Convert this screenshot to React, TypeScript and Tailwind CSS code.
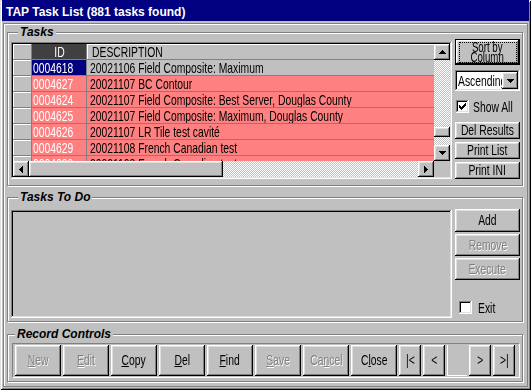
import type { ReactNode } from "react"

const raised =
  "bg-[#c0c0c0] shadow-[inset_-1px_-1px_#000,inset_1px_1px_#fff,inset_-2px_-2px_#808080,inset_2px_2px_#dfdfdf]"
const field =
  "shadow-[inset_-1px_-1px_#fff,inset_1px_1px_#808080,inset_-2px_-2px_#dfdfdf,inset_2px_2px_#000]"
const dither =
  "bg-[image:repeating-conic-gradient(#c0c0c0_0%_25%,#ffffff_0%_50%)] bg-[length:2px_2px]"

const tasks = [
  ["0004618", "20021106 Field Composite: Maximum"],
  ["0004627", "20021107 BC Contour"],
  ["0004624", "20021107 Field Composite: Best Server, Douglas County"],
  ["0004625", "20021107 Field Composite: Maximum, Douglas County"],
  ["0004626", "20021107 LR Tile test cavité"],
  ["0004629", "20021108 French Canadian test"],
  ["0004630", "20021108 French Canadian test"],
]

// the old dialog font is tall and narrow, squeeze Liberation Sans to match
function N({ children, center }: { children: ReactNode; center?: boolean }) {
  return (
    <span className={`inline-block scale-x-[0.69] ${center ? "origin-center" : "origin-left"}`}>{children}</span>
  )
}

function Button({
  children,
  disabled,
  className = "",
}: {
  children: ReactNode
  disabled?: boolean
  className?: string
}) {
  return (
    <div
      className={`${raised} flex items-center justify-center ${
        disabled ? "text-[#808080] [text-shadow:1px_1px_0_#fff]" : "text-black"
      } ${className}`}
    >
      <N center>{children}</N>
    </div>
  )
}

function Arrow({ dir }: { dir: "up" | "down" | "left" | "right" }) {
  if (dir === "up" || dir === "down") {
    return (
      <svg width="7" height="4" viewBox="0 0 7 4" shapeRendering="crispEdges">
        <polygon points={dir === "up" ? "3.5,0 7,4 0,4" : "0,0 7,0 3.5,4"} fill="#000" />
      </svg>
    )
  }
  return (
    <svg width="4" height="7" viewBox="0 0 4 7" shapeRendering="crispEdges">
      <polygon points={dir === "left" ? "0,3.5 4,0 4,7" : "0,0 4,3.5 0,7"} fill="#000" />
    </svg>
  )
}

function ScrollBtn({ dir }: { dir: "up" | "down" | "left" | "right" }) {
  return (
    <div className={`${raised} w-[16px] h-[16px] shrink-0 flex items-center justify-center`}>
      <Arrow dir={dir} />
    </div>
  )
}

function Checkbox({ checked }: { checked?: boolean }) {
  return (
    <div className={`${field} bg-white w-[13px] h-[13px] shrink-0 flex items-center justify-center`}>
      {checked && (
        <svg width="7" height="7" viewBox="0 0 7 7" shapeRendering="crispEdges">
          <path d="M0 2h1v1h1v1h1v-1h1v-1h1v-1h1v-1h1v3h-1v1h-1v1h-1v1h-1v1h-1v-1h-1v-1h-1z" fill="#000" />
        </svg>
      )}
    </div>
  )
}

function GroupBox({
  label,
  labelPos,
  className,
  children,
}: {
  label: string
  labelPos: string
  className: string
  children: ReactNode
}) {
  return (
    <div
      className={`relative shrink-0 w-[516px] border border-[#808080] shadow-[inset_1px_1px_#fff,1px_1px_#fff] ${className}`}
    >
      <span
        className={`absolute -top-[7px] ${labelPos} px-[2px] bg-[#c0c0c0] font-bold italic text-[12px] leading-[13px]`}
      >
        {label}
      </span>
      {children}
    </div>
  )
}

function TaskGrid() {
  return (
    <div className={`${field} bg-[#c0c0c0] w-[441px] h-[137px] p-[2px] mt-[3px] shrink-0`}>
      <div className="flex h-[117px]">
        <div className="w-[421px] overflow-hidden">
          {/* header */}
          <div className="flex h-[16px] border-b border-[#808080] leading-[15px]">
            <div className="w-[19px] border-r border-[#808080] shadow-[inset_1px_1px_#fff]" />
            <div className="w-[55px] border-r border-[#808080] bg-[#404040] text-white text-center">
              <N center>ID</N>
            </div>
            <div className="flex-1 pl-[5px] shadow-[inset_1px_1px_#fff]">
              <N>DESCRIPTION</N>
            </div>
          </div>
          {tasks.map(([id, desc], i) => (
            <div key={id + i} className="flex h-[16px] border-b border-[#808080] leading-[15px]">
              <div className="w-[19px] border-r border-[#808080] shadow-[inset_1px_1px_#fff]" />
              <div
                className={`w-[55px] border-r border-[#808080] pl-[1px] text-white ${
                  i === 0 ? "bg-[#000080]" : "bg-[#ff8080]"
                }`}
              >
                <N>{id}</N>
              </div>
              <div className={`flex-1 pl-[3px] overflow-hidden ${i === 0 ? "bg-[#c0c0c0]" : "bg-[#ff8080]"}`}>
                <N>{desc}</N>
              </div>
            </div>
          ))}
        </div>
        <div className="w-[16px] flex flex-col">
          <ScrollBtn dir="up" />
          <div className={`h-[67px] ${dither}`} />
          <div className={`h-[10px] ${raised}`} />
          <div className={`flex-1 ${dither}`} />
          <ScrollBtn dir="down" />
        </div>
      </div>
      <div className="flex h-[16px]">
        <ScrollBtn dir="left" />
        <div className={`w-[194px] ${raised}`} />
        <div className={`flex-1 ${dither}`} />
        <ScrollBtn dir="right" />
        <div className="w-[16px] bg-[#c0c0c0]" />
      </div>
    </div>
  )
}

export default function App() {
  return (
    <div className="w-[531px] h-[390px] bg-[#c0c0c0] px-[2px] shadow-[inset_1px_1px_#dfdfdf,inset_-1px_-1px_#000,inset_2px_2px_#fff,inset_-2px_-2px_#808080] font-['Liberation_Sans',Arial,sans-serif] text-[15px] text-black whitespace-nowrap">
      {/* Title bar */}
      <div className="h-[21px] bg-[#000080] text-white pl-[4px] pt-[5px] font-bold text-[12px] leading-[14px]">
        TAP Task List (881 tasks found)
      </div>

      <div className="mt-[2px] mx-[1px] h-[364px] border border-[#808080] shadow-[inset_1px_1px_#fff] pt-[8px] pl-[3px] flex flex-col">
        {/* Tasks */}
        <GroupBox label="Tasks" labelPos="left-[10px]" className="h-[154px] pl-[3px] pt-[6px]">
          <div className="flex items-start gap-[3px]">
            <TaskGrid />
            <div className="w-[65px] flex flex-col">
              <div className="relative h-[26px] border border-black">
                <div className={`${raised} h-full flex flex-col items-center justify-center text-[14px] leading-[10px]`}>
                  <N center>Sort by</N>
                  <N center>Column</N>
                </div>
                <div className="absolute left-[3px] right-[2px] top-[2px] bottom-[1px] border border-dotted border-black" />
              </div>
              <div className={`${field} bg-white mt-[5px] h-[21px] p-[2px] flex`}>
                <div className="flex-1 overflow-hidden pl-[1px] leading-[17px]">
                  <N>Ascending</N>
                </div>
                <div className={`${raised} w-[16px] flex items-center justify-center`}>
                  <Arrow dir="down" />
                </div>
              </div>
              <div className="mt-[9px] ml-[1px] flex items-center gap-[4px] h-[13px]">
                <Checkbox checked />
                <span className="leading-[13px]">
                  <N>Show All</N>
                </span>
              </div>
              <Button className="mt-[9px] h-[17px]">Del Results</Button>
              <Button className="mt-[3px] h-[17px]">Print List</Button>
              <Button className="mt-[3px] h-[17px]">Print INI</Button>
            </div>
          </div>
        </GroupBox>

        {/* Tasks To Do */}
        <GroupBox label="Tasks To Do" labelPos="left-[10px]" className="mt-[11px] h-[125px] pl-[3px] pt-[11px]">
          <div className="flex items-start gap-[3px]">
            <div className={`${field} bg-[#c0c0c0] w-[441px] h-[108px] mt-[1px]`} />
            <div className="w-[65px] flex flex-col">
              <Button className="h-[23px]">Add</Button>
              <Button disabled className="mt-[2px] h-[22px]">
                Remove
              </Button>
              <Button disabled className="mt-[2px] h-[22px]">
                Execute
              </Button>
              <div className="mt-[21px] ml-[4px] flex items-center gap-[6px] h-[13px]">
                <Checkbox />
                <span className="leading-[13px]">
                  <N>Exit</N>
                </span>
              </div>
            </div>
          </div>
        </GroupBox>

        {/* Record Controls */}
        <GroupBox label="Record Controls" labelPos="left-[7px]" className="mt-[12px] h-[48px] pl-[4px] pt-[8px]">
          <div className="w-[508px] h-[35px] border-t border-l border-[#808080] border-b border-r border-b-white border-r-white pt-[1px] pl-[2px] flex gap-[2px]">
            <Button disabled className="w-[46px] h-[31px]">
              <u>N</u>ew
            </Button>
            <Button disabled className="w-[46px] h-[31px]">
              <u>E</u>dit
            </Button>
            <Button className="w-[46px] h-[31px]">
              <u>C</u>opy
            </Button>
            <Button className="w-[46px] h-[31px]">
              <u>D</u>el
            </Button>
            <Button className="w-[46px] h-[31px]">
              <u>F</u>ind
            </Button>
            <Button disabled className="w-[46px] h-[31px]">
              <u>S</u>ave
            </Button>
            <Button disabled className="w-[46px] h-[31px]">
              Ca<u>n</u>cel
            </Button>
            <Button className="w-[46px] h-[31px]">
              C<u>l</u>ose
            </Button>
            <Button className="w-[22px] h-[31px]">|&lt;</Button>
            <Button className="w-[22px] h-[31px]">&lt;</Button>
            <div className="w-[20px] h-[31px] border-l border-b border-white" />
            <Button className="w-[22px] h-[31px]">&gt;</Button>
            <Button className="w-[22px] h-[31px]">&gt;|</Button>
          </div>
        </GroupBox>
      </div>
    </div>
  )
}
